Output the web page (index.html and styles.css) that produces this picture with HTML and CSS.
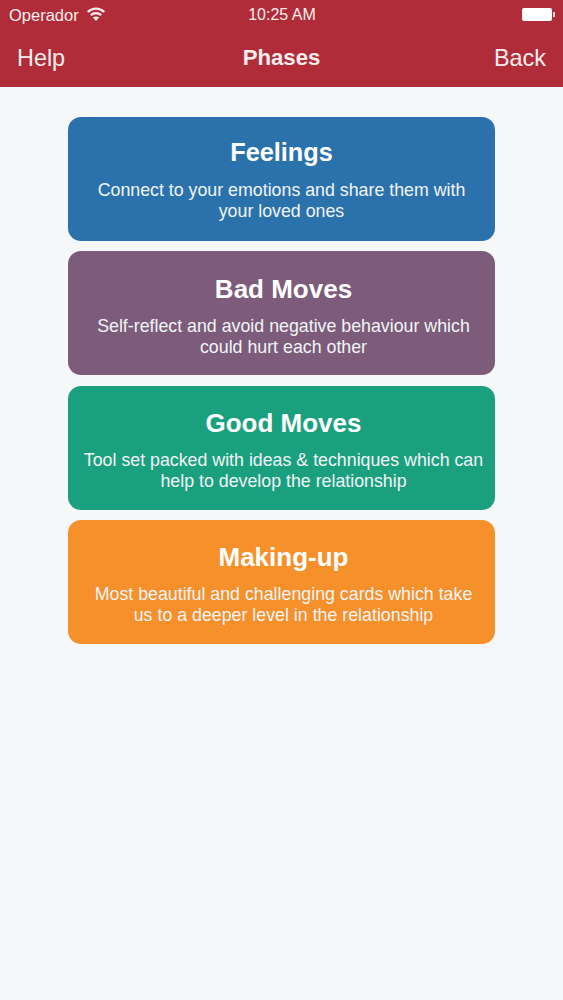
FILE: index.html
```html
<!DOCTYPE html>
<html lang="en">
<head>
    <meta charset="UTF-8">
    <meta name="viewport" content="width=device-width, initial-scale=1.0">
    <title>Phases</title>
    <link rel="stylesheet" href="styles.css">
</head>
<body>
    <header class="header">
        <div class="status-bar">
            <div class="status-left">
                <span class="carrier">Operador</span>
                <svg class="wifi" width="18" height="14" viewBox="0 0 18 14" fill="none" stroke="#fbeeee" stroke-width="2.3">
                    <path d="M0.8 5 C5.5 0.6 12.5 0.6 17.2 5"/>
                    <path d="M3.8 8.2 C6.8 5.4 11.2 5.4 14.2 8.2"/>
                    <path d="M9 14 L5.9 10.6 C7.8 9.2 10.2 9.2 12.1 10.6 Z" fill="#fbeeee" stroke="none"/>
                </svg>
            </div>
            <span class="time">10:25 AM</span>
            <div class="battery">
                <div class="battery-body"></div>
                <div class="battery-nub"></div>
            </div>
        </div>
        <nav class="nav-bar">
            <a class="nav-link">Help</a>
            <h1 class="nav-title">Phases</h1>
            <a class="nav-link nav-link-right">Back</a>
        </nav>
    </header>

    <main class="phases">
        <div class="phase phase-feelings">
            <h2>Feelings</h2>
            <p>Connect to your emotions and share them with<br>your loved ones</p>
        </div>
        <div class="phase phase-bad">
            <h2>Bad Moves</h2>
            <p>Self-reflect and avoid negative behaviour which<br>could hurt each other</p>
        </div>
        <div class="phase phase-good">
            <h2>Good Moves</h2>
            <p>Tool set packed with ideas &amp; techniques which can<br>help to develop the relationship</p>
        </div>
        <div class="phase phase-making">
            <h2>Making-up</h2>
            <p>Most beautiful and challenging cards which take<br>us to a deeper level in the relationship</p>
        </div>
    </main>
</body>
</html>
```

FILE: styles.css
```css
body {
    margin: 0;
    height: 1000px;
    overflow: hidden;
    background: #f6f7f8;
    font-family: "Liberation Sans", Arial, sans-serif;
    color: #fff;
}
.header {
    height: 87px;
    box-sizing: border-box;
    background: #af2c38;
    border-bottom: 1px solid #a8323c;
    color: #fbeeee;
}
.status-bar {
    height: 30px;
    padding: 0 8px 0 9px;
    display: grid;
    grid-template-columns: 1fr auto 1fr;
    align-items: center;
}
.status-left {
    display: flex;
    align-items: center;
    gap: 8px;
}
.carrier {
    font-size: 16.5px;
}
.wifi {
    margin-top: -2px;
}
.time {
    font-size: 16px;
}
.battery {
    justify-self: end;
    display: flex;
    align-items: center;
    margin-top: -2px;
}
.battery-body {
    width: 30px;
    height: 13px;
    background: #fff;
    border-radius: 2px;
}
.battery-nub {
    width: 2px;
    height: 5px;
    margin-left: 1px;
    background: #f3d5d7;
}
.nav-bar {
    height: 56px;
    padding: 0 17px;
    display: grid;
    grid-template-columns: 1fr auto 1fr;
    align-items: center;
}
.nav-link {
    font-size: 23.4px;
}
.nav-link-right {
    text-align: right;
}
.nav-title {
    margin: 0;
    font-size: 22.2px;
    font-weight: bold;
}
.phases {
    width: 427px;
    margin: 30px 0 0 68px;
    display: flex;
    flex-direction: column;
    gap: 10.3px;
}
.phase {
    height: 124px;
    box-sizing: border-box;
    padding: 23.5px 0 0 4px;
    border-radius: 13px;
    text-align: center;
}
.phase h2 {
    margin: 0 0 12px;
    font-size: 26px;
    line-height: 29px;
    font-weight: bold;
}
.phase p {
    margin: 0;
    font-size: 17.8px;
    line-height: 21px;
    color: #f1f5f7;
    white-space: nowrap;
}
.phase-feelings {
    padding: 21px 0 0;
    background: #2b72ac;
}
.phase-feelings h2 {
    margin-bottom: 13px;
    font-size: 25.3px;
}
.phase-bad {
    background: #7c5c7a;
}
.phase-good {
    background: #1ba07f;
}
.phase-making {
    background: #f6902b;
}
```
